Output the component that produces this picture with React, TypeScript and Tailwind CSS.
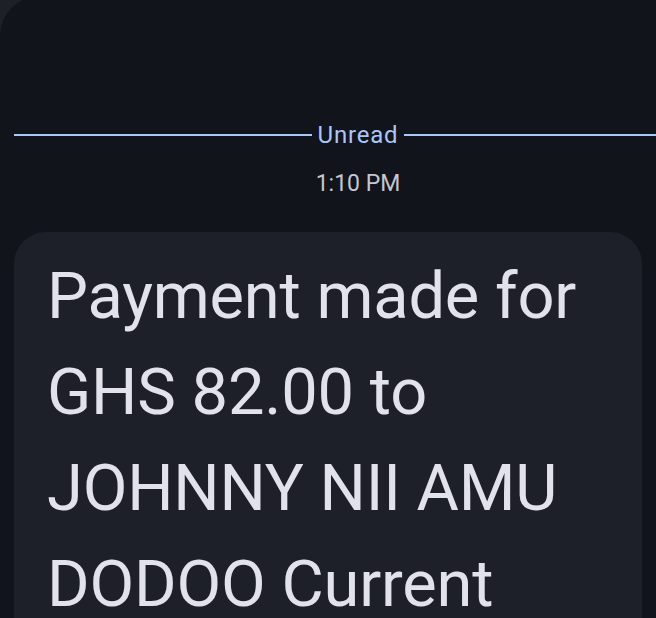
export default function App() {
  return (
    <div className="h-[618px] w-[656px] overflow-hidden bg-[#1d2027]" style={{ fontFamily: "Roboto, 'Open Sans', sans-serif" }}>
      <div className="-mt-[4px] h-[640px] w-[716px] rounded-tl-[40px] bg-[#11141b] px-[14px] pt-[4px]">
        <div className="flex items-center pt-[119px]">
          <div className="h-[2px] flex-1 bg-[#a8c7fa]" />
          <span className="px-[6px] text-[24px] leading-[32px] tracking-[0.8px] text-[#a8c7fa]">Unread</span>
          <div className="h-[2px] flex-1 bg-[#a8c7fa]" />
        </div>
        <div className="mt-[18px] text-center text-[23px] leading-[30px] text-[#c4c7cf]">1:10 PM</div>
        <div className="mt-[33px] w-[628px] rounded-[32px] bg-[#1e2029] pl-[33px] pr-[20px] pt-[16px] pb-[40px]">
          <p className="text-[65px] leading-[96px] tracking-[-0.2px] text-[#e2e2ea]">
            Payment made for GHS 82.00 to JOHNNY NII AMU DODOO Current
          </p>
        </div>
      </div>
    </div>
  );
}
